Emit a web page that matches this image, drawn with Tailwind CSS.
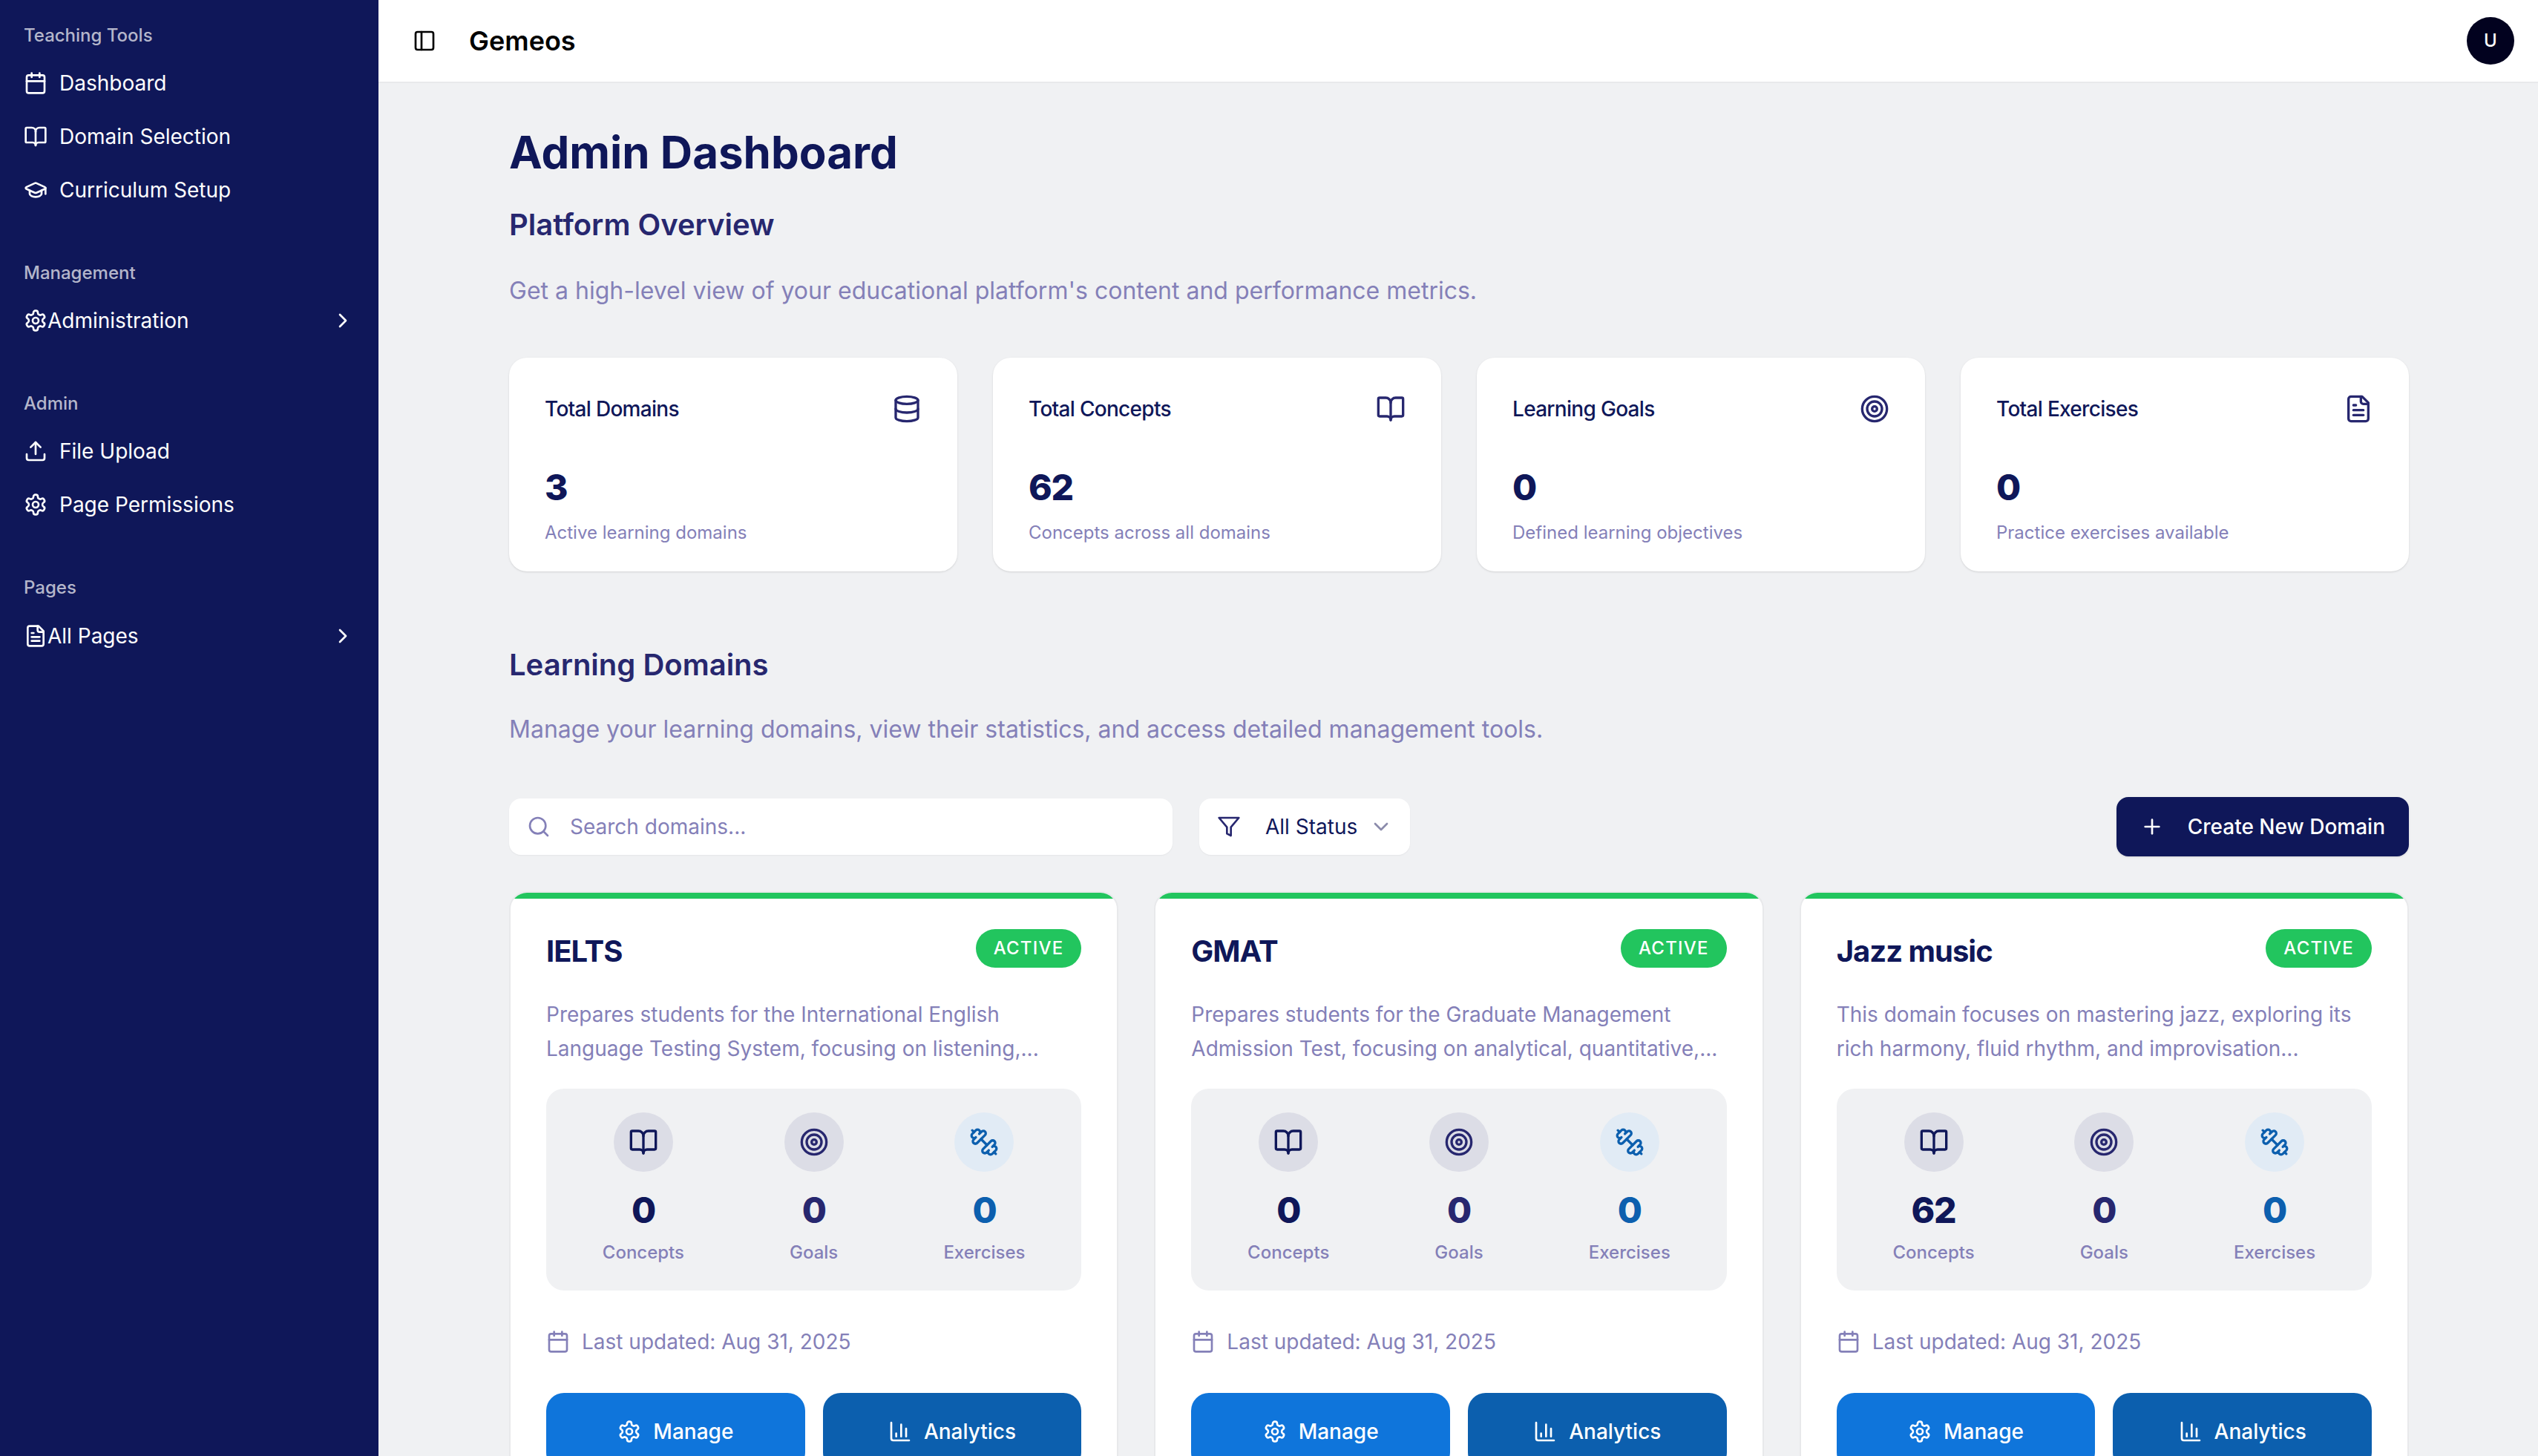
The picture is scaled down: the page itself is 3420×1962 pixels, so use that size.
<!DOCTYPE html>
<html lang="en">
<head>
    <meta charset="UTF-8">
    <meta name="viewport" content="width=device-width, initial-scale=1.0">
    <title>Gemeos - Admin Dashboard</title>
    <script src="https://cdn.jsdelivr.net/npm/@tailwindcss/browser@4"></script>
</head>
<body class="bg-[#f0f1f3] h-screen overflow-hidden flex font-[Inter,sans-serif] text-[#0f1759]">

    <!-- Icon sprite -->
    <svg class="hidden">
        <symbol id="i-calendar" viewBox="0 0 24 24" fill="none" stroke="currentColor" stroke-width="2" stroke-linecap="round" stroke-linejoin="round"><path d="M8 2v4"/><path d="M16 2v4"/><rect width="18" height="18" x="3" y="4" rx="2"/><path d="M3 10h18"/></symbol>
        <symbol id="i-book" viewBox="0 0 24 24" fill="none" stroke="currentColor" stroke-width="2" stroke-linecap="round" stroke-linejoin="round"><path d="M12 7v14"/><path d="M3 18a1 1 0 0 1-1-1V4a1 1 0 0 1 1-1h5a4 4 0 0 1 4 4 4 4 0 0 1 4-4h5a1 1 0 0 1 1 1v13a1 1 0 0 1-1 1h-6a3 3 0 0 0-3 3 3 3 0 0 0-3-3z"/></symbol>
        <symbol id="i-cap" viewBox="0 0 24 24" fill="none" stroke="currentColor" stroke-width="2" stroke-linecap="round" stroke-linejoin="round"><path d="M21.42 10.922a1 1 0 0 0-.019-1.838L12.83 5.18a2 2 0 0 0-1.66 0L2.6 9.08a1 1 0 0 0 0 1.832l8.57 3.908a2 2 0 0 0 1.66 0z"/><path d="M22 10v6"/><path d="M6 12.5V16a6 3 0 0 0 12 0v-3.5"/></symbol>
        <symbol id="i-gear" viewBox="0 0 24 24" fill="none" stroke="currentColor" stroke-width="2" stroke-linecap="round" stroke-linejoin="round"><path d="M12.22 2h-.44a2 2 0 0 0-2 2v.18a2 2 0 0 1-1 1.73l-.43.25a2 2 0 0 1-2 0l-.15-.08a2 2 0 0 0-2.73.73l-.22.38a2 2 0 0 0 .73 2.73l.15.1a2 2 0 0 1 1 1.72v.51a2 2 0 0 1-1 1.74l-.15.09a2 2 0 0 0-.73 2.73l.22.38a2 2 0 0 0 2.73.73l.15-.08a2 2 0 0 1 2 0l.43.25a2 2 0 0 1 1 1.73V20a2 2 0 0 0 2 2h.44a2 2 0 0 0 2-2v-.18a2 2 0 0 1 1-1.73l.43-.25a2 2 0 0 1 2 0l.15.08a2 2 0 0 0 2.73-.73l.22-.39a2 2 0 0 0-.73-2.73l-.15-.08a2 2 0 0 1-1-1.74v-.5a2 2 0 0 1 1-1.74l.15-.09a2 2 0 0 0 .73-2.73l-.22-.38a2 2 0 0 0-2.73-.73l-.15.08a2 2 0 0 1-2 0l-.43-.25a2 2 0 0 1-1-1.73V4a2 2 0 0 0-2-2z"/><circle cx="12" cy="12" r="3"/></symbol>
        <symbol id="i-upload" viewBox="0 0 24 24" fill="none" stroke="currentColor" stroke-width="2" stroke-linecap="round" stroke-linejoin="round"><path d="M21 15v4a2 2 0 0 1-2 2H5a2 2 0 0 1-2-2v-4"/><polyline points="17 8 12 3 7 8"/><line x1="12" x2="12" y1="3" y2="15"/></symbol>
        <symbol id="i-file" viewBox="0 0 24 24" fill="none" stroke="currentColor" stroke-width="2" stroke-linecap="round" stroke-linejoin="round"><path d="M15 2H6a2 2 0 0 0-2 2v16a2 2 0 0 0 2 2h12a2 2 0 0 0 2-2V7Z"/><path d="M14 2v4a2 2 0 0 0 2 2h4"/><path d="M10 9H8"/><path d="M16 13H8"/><path d="M16 17H8"/></symbol>
        <symbol id="i-right" viewBox="0 0 24 24" fill="none" stroke="currentColor" stroke-width="2" stroke-linecap="round" stroke-linejoin="round"><path d="m9 18 6-6-6-6"/></symbol>
        <symbol id="i-down" viewBox="0 0 24 24" fill="none" stroke="currentColor" stroke-width="2" stroke-linecap="round" stroke-linejoin="round"><path d="m6 9 6 6 6-6"/></symbol>
        <symbol id="i-panel" viewBox="0 0 24 24" fill="none" stroke="currentColor" stroke-width="2" stroke-linecap="round" stroke-linejoin="round"><rect width="18" height="18" x="3" y="3" rx="2"/><path d="M9 3v18"/></symbol>
        <symbol id="i-database" viewBox="0 0 24 24" fill="none" stroke="currentColor" stroke-width="2" stroke-linecap="round" stroke-linejoin="round"><ellipse cx="12" cy="5" rx="9" ry="3"/><path d="M3 5V19A9 3 0 0 0 21 19V5"/><path d="M3 12A9 3 0 0 0 21 12"/></symbol>
        <symbol id="i-target" viewBox="0 0 24 24" fill="none" stroke="currentColor" stroke-width="2" stroke-linecap="round" stroke-linejoin="round"><circle cx="12" cy="12" r="10"/><circle cx="12" cy="12" r="6"/><circle cx="12" cy="12" r="2"/></symbol>
        <symbol id="i-search" viewBox="0 0 24 24" fill="none" stroke="currentColor" stroke-width="2" stroke-linecap="round" stroke-linejoin="round"><circle cx="11" cy="11" r="8"/><path d="m21 21-4.3-4.3"/></symbol>
        <symbol id="i-filter" viewBox="0 0 24 24" fill="none" stroke="currentColor" stroke-width="2" stroke-linecap="round" stroke-linejoin="round"><polygon points="22 3 2 3 10 12.46 10 19 14 21 14 12.46 22 3"/></symbol>
        <symbol id="i-plus" viewBox="0 0 24 24" fill="none" stroke="currentColor" stroke-width="2" stroke-linecap="round" stroke-linejoin="round"><path d="M5 12h14"/><path d="M12 5v14"/></symbol>
        <symbol id="i-dumbbell" viewBox="0 0 24 24" fill="none" stroke="currentColor" stroke-width="2" stroke-linecap="round" stroke-linejoin="round"><path d="M14.4 14.4 9.6 9.6"/><path d="M18.657 21.485a2 2 0 1 1-2.829-2.828l-1.767 1.768a2 2 0 1 1-2.829-2.829l6.364-6.364a2 2 0 1 1 2.829 2.829l-1.768 1.767a2 2 0 1 1 2.828 2.829z"/><path d="m21.5 21.5-1.4-1.4"/><path d="M3.9 3.9 2.5 2.5"/><path d="M6.404 12.768a2 2 0 1 1-2.828-2.829l1.767-1.768a2 2 0 1 1-2.828-2.829l2.828-2.828a2 2 0 1 1 2.829 2.828l1.768-1.767a2 2 0 1 1 2.828 2.828z"/></symbol>
        <symbol id="i-chart" viewBox="0 0 24 24" fill="none" stroke="currentColor" stroke-width="2" stroke-linecap="round" stroke-linejoin="round"><path d="M3 3v16a2 2 0 0 0 2 2h16"/><path d="M18 17V9"/><path d="M13 17V5"/><path d="M8 17v-3"/></symbol>
    </svg>

    <!-- Sidebar -->
    <aside class="w-[510px] shrink-0 h-full bg-[#0f1759] text-white pt-[15px] pl-[32px] pr-[32px] text-[28px]">
        <div class="h-[64px] pt-[1px] flex items-center text-[24px] font-medium text-white/70">Teaching Tools</div>
        <div class="flex flex-col gap-[8px] mt-[1px]">
            <a class="h-[64px] flex items-center gap-[16px]"><svg class="w-[32px] h-[32px]"><use href="#i-calendar"/></svg>Dashboard</a>
            <a class="h-[64px] flex items-center gap-[16px]"><svg class="w-[32px] h-[32px]"><use href="#i-book"/></svg>Domain Selection</a>
            <a class="h-[64px] flex items-center gap-[16px]"><svg class="w-[32px] h-[32px]"><use href="#i-cap"/></svg>Curriculum Setup</a>
        </div>

        <div class="h-[64px] mt-[47px] pt-[1px] flex items-center text-[24px] font-medium text-white/70">Management</div>
        <a class="h-[64px] mt-[1px] flex items-center"><svg class="w-[32px] h-[32px]"><use href="#i-gear"/></svg>Administration<svg class="w-[32px] h-[32px] ml-auto"><use href="#i-right"/></svg></a>

        <div class="h-[64px] mt-[47px] pt-[1px] flex items-center text-[24px] font-medium text-white/70">Admin</div>
        <div class="flex flex-col gap-[8px] mt-[1px]">
            <a class="h-[64px] flex items-center gap-[16px]"><svg class="w-[32px] h-[32px]"><use href="#i-upload"/></svg>File Upload</a>
            <a class="h-[64px] flex items-center gap-[16px]"><svg class="w-[32px] h-[32px]"><use href="#i-gear"/></svg>Page Permissions</a>
        </div>

        <div class="h-[64px] mt-[48px] flex items-center text-[24px] font-medium text-white/70">Pages</div>
        <a class="h-[64px] mt-[1px] flex items-center"><svg class="w-[32px] h-[32px]"><use href="#i-file"/></svg>All Pages<svg class="w-[32px] h-[32px] ml-auto"><use href="#i-right"/></svg></a>
    </aside>

    <div class="flex-1 min-w-0 h-full flex flex-col">
        <!-- Header -->
        <header class="h-[112px] shrink-0 bg-white border-b-2 border-[#e8e9eb] flex items-center pl-[46px] pr-[32px]">
            <svg class="w-[32px] h-[32px] text-black"><use href="#i-panel"/></svg>
            <span class="ml-[44px] text-[36px] font-semibold text-black">Gemeos</span>
            <div class="ml-auto w-[64px] h-[64px] rounded-full bg-[#02021f] text-white text-[24px] font-medium flex items-center justify-center">U</div>
        </header>

        <!-- Main -->
        <main class="flex-1 min-h-0 overflow-hidden pl-[176px] pr-[174px] pt-[57px]">
            <h1 class="text-[60px] leading-[72px] font-bold">Admin Dashboard</h1>
            <h2 class="mt-[34px] text-[40px] leading-[56px] font-semibold text-[#27276f]">Platform Overview</h2>
            <p class="mt-[37px] text-[32px] leading-[48px] text-[#8480b8]">Get a high-level view of your educational platform's content and performance metrics.</p>

            <div id="statCards" class="mt-[66px] grid grid-cols-4 gap-[48px]"></div>

            <h2 class="mt-[98px] text-[40px] leading-[56px] font-semibold text-[#27276f]">Learning Domains</h2>
            <p class="mt-[35px] text-[32px] leading-[48px] text-[#8480b8]">Manage your learning domains, view their statistics, and access detailed management tools.</p>

            <!-- Toolbar -->
            <div class="mt-[67px] flex items-center">
                <div class="w-[894px] h-[76px] bg-white rounded-[16px] flex items-center pl-[24px] gap-[26px] shadow-xs">
                    <svg class="w-[32px] h-[32px] text-[#8480b8]"><use href="#i-search"/></svg>
                    <input type="text" placeholder="Search domains..." class="flex-1 text-[28px] outline-none placeholder:text-[#8480b8]">
                </div>
                <button class="ml-[36px] w-[284px] h-[76px] bg-white rounded-[16px] flex items-center pl-[24px] text-[28px] shadow-xs">
                    <svg class="w-[32px] h-[32px] text-[#27276f]"><use href="#i-filter"/></svg>
                    <span class="ml-[33px]">All Status</span>
                    <svg class="w-[32px] h-[32px] ml-[16px] text-[#8b8bab]"><use href="#i-down"/></svg>
                </button>
                <button class="ml-auto h-[80px] bg-[#0f1759] text-white rounded-[16px] flex items-center gap-[32px] px-[32px] text-[28px] font-medium shadow-sm">
                    <svg class="w-[32px] h-[32px]"><use href="#i-plus"/></svg>Create New Domain
                </button>
            </div>

            <div id="domainCards" class="mt-[47px] grid grid-cols-3 gap-[48px]"></div>
        </main>
    </div>

    <script>
        const stats = [
            { title: "Total Domains", icon: "i-database", value: "3", sub: "Active learning domains" },
            { title: "Total Concepts", icon: "i-book", value: "62", sub: "Concepts across all domains" },
            { title: "Learning Goals", icon: "i-target", value: "0", sub: "Defined learning objectives" },
            { title: "Total Exercises", icon: "i-file", value: "0", sub: "Practice exercises available" }
        ];

        const domains = [
            { name: "IELTS", desc: "Prepares students for the International English<br>Language Testing System, focusing on listening,...", concepts: 0 },
            { name: "GMAT", desc: "Prepares students for the Graduate Management<br>Admission Test, focusing on analytical, quantitative,...", concepts: 0 },
            { name: "Jazz music", desc: "This domain focuses on mastering jazz, exploring its<br>rich harmony, fluid rhythm, and improvisation...", concepts: 62 }
        ];

        document.getElementById("statCards").innerHTML = stats.map(s => `
            <div class="h-[288px] bg-white rounded-[24px] shadow-sm px-[48px] pt-[49px]">
                <div class="flex items-center justify-between h-[40px]">
                    <span class="text-[28px] leading-[40px] font-medium tracking-tight">${s.title}</span>
                    <svg class="w-[40px] h-[40px] text-[#27276f]"><use href="#${s.icon}"/></svg>
                </div>
                <div class="mt-[54px] text-[48px] leading-[64px] font-extrabold tracking-tight">${s.value}</div>
                <div class="mt-[13px] text-[24px] leading-[32px] text-[#8480b8]">${s.sub}</div>
            </div>
        `).join("");

        document.getElementById("domainCards").innerHTML = domains.map(d => `
            <div class="h-[900px] bg-white rounded-[24px] border-2 border-[#e8e9eb] overflow-hidden">
                <div class="h-[8px] bg-[#22c55e]"></div>
                <div class="px-[48px] pt-[41px]">
                    <div class="flex items-start justify-between h-[57px]">
                        <h3 class="mt-[2px] text-[40px] leading-[56px] font-bold tracking-tight">${d.name}</h3>
                        <span class="h-[52px] px-[24px] rounded-full bg-[#22c55e] text-white text-[24px] font-medium tracking-wider flex items-center">ACTIVE</span>
                    </div>
                    <p class="mt-[35px] text-[28px] leading-[46px] text-[#8480b8]">${d.desc}</p>
                    <div class="mt-[31px] h-[272px] bg-[#f0f1f3] rounded-[24px] p-[32px] grid grid-cols-3 gap-[32px] text-center">
                        <div class="flex flex-col items-center">
                            <div class="w-[80px] h-[80px] rounded-full bg-[#dcdde6] flex items-center justify-center"><svg class="w-[40px] h-[40px] text-[#0f1759]"><use href="#i-book"/></svg></div>
                            <div class="mt-[20px] text-[48px] leading-[64px] font-extrabold tracking-tight">${d.concepts}</div>
                            <div class="mt-[9px] text-[24px] leading-[32px] font-medium text-[#8480b8]">Concepts</div>
                        </div>
                        <div class="flex flex-col items-center">
                            <div class="w-[80px] h-[80px] rounded-full bg-[#dcdde6] flex items-center justify-center"><svg class="w-[40px] h-[40px] text-[#27276f]"><use href="#i-target"/></svg></div>
                            <div class="mt-[20px] text-[48px] leading-[64px] font-extrabold tracking-tight text-[#27276f]">0</div>
                            <div class="mt-[9px] text-[24px] leading-[32px] font-medium text-[#8480b8]">Goals</div>
                        </div>
                        <div class="flex flex-col items-center">
                            <div class="w-[80px] h-[80px] rounded-full bg-[#e1ebf5] flex items-center justify-center"><svg class="w-[40px] h-[40px] text-[#0c5fae]"><use href="#i-dumbbell"/></svg></div>
                            <div class="mt-[20px] text-[48px] leading-[64px] font-extrabold tracking-tight text-[#0c5fae]">0</div>
                            <div class="mt-[9px] text-[24px] leading-[32px] font-medium text-[#8480b8]">Exercises</div>
                        </div>
                    </div>
                    <div class="mt-[49px] h-[40px] flex items-center gap-[16px] text-[28px] text-[#8480b8]">
                        <svg class="w-[32px] h-[32px]"><use href="#i-calendar"/></svg>Last updated: Aug 31, 2025
                    </div>
                    <div class="mt-[49px] grid grid-cols-2 gap-[24px]">
                        <button class="h-[104px] rounded-[24px] bg-[#0f75db] text-white text-[28px] font-medium flex items-center justify-center gap-[16px]"><svg class="w-[32px] h-[32px]"><use href="#i-gear"/></svg>Manage</button>
                        <button class="h-[104px] rounded-[24px] bg-[#0c5fae] text-white text-[28px] font-medium flex items-center justify-center gap-[16px]"><svg class="w-[32px] h-[32px]"><use href="#i-chart"/></svg>Analytics</button>
                    </div>
                </div>
            </div>
        `).join("");
    </script>

</body>
</html>
